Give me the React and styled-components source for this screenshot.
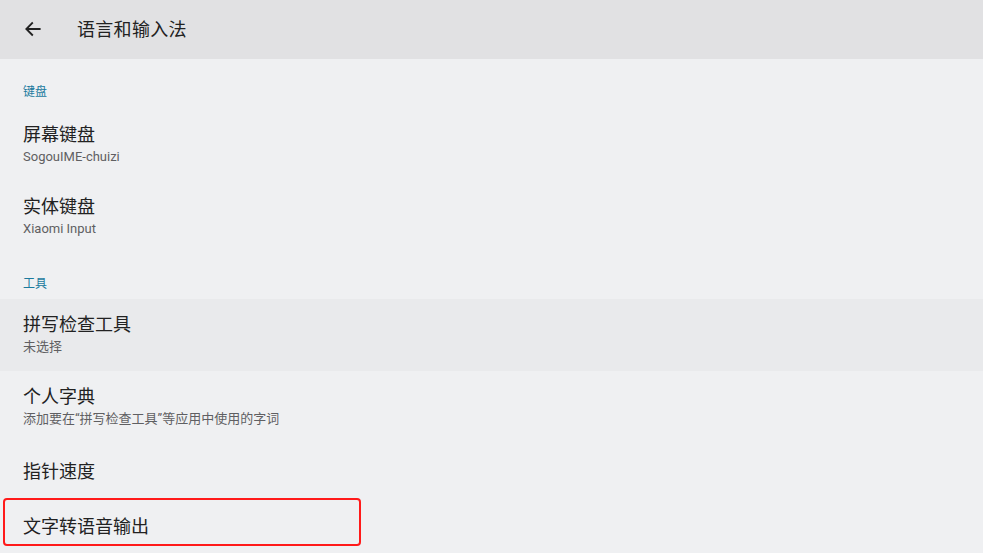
import React from "react";
import styled, { createGlobalStyle } from "styled-components";

const GlobalStyle = createGlobalStyle`
  html, body {
    margin: 0;
    padding: 0;
    background: #eff0f2;
    font-family: Roboto, "Noto Sans CJK SC", sans-serif;
    -webkit-font-smoothing: antialiased;
  }
`;

const Screen = styled.div`
  display: flex;
  flex-direction: column;
  width: 983px;
  height: 553px;
  overflow: hidden;
  background: #eff0f2;
`;

const TopBar = styled.div`
  display: flex;
  align-items: center;
  height: 59px;
  flex-shrink: 0;
  background: #e1e1e3;
`;

const BackButton = styled.div`
  display: flex;
  align-items: center;
  justify-content: center;
  width: 66px;
  height: 59px;
  padding-bottom: 1px;
  box-sizing: border-box;
  color: #222;
`;

const PageTitle = styled.div`
  margin-left: 11px;
  padding-bottom: 4px;
  font-size: 18px;
  color: #222;
  letter-spacing: 0.3px;
`;

const List = styled.div`
  display: flex;
  flex-direction: column;
  flex: 1;
`;

const Category = styled.div`
  height: ${(p) => p.$height}px;
  box-sizing: border-box;
  padding: ${(p) => p.$top}px 23px 0;
  font-size: 12px;
  line-height: 16px;
  color: #1b7a9e;
`;

const Row = styled.div`
  display: flex;
  flex-direction: column;
  box-sizing: border-box;
  height: ${(p) => (p.$single ? 55 : 72)}px;
  padding: ${(p) => (p.$single ? 17 : 14)}px 23px 0;
  background: ${(p) => (p.$active ? "#e9eaec" : "transparent")};
  position: relative;
`;

const Title = styled.div`
  font-size: 18px;
  line-height: 24px;
  color: #222;
`;

const Summary = styled.div`
  font-size: 13px;
  line-height: 16px;
  margin-top: 2px;
  color: #5f5f62;
`;

const Highlight = styled.div`
  position: absolute;
  left: 3px;
  top: 0;
  width: 358px;
  height: 48px;
  border: 2px solid #ff1a1a;
  border-radius: 4px;
  box-sizing: border-box;
  pointer-events: none;
`;

const BottomEdge = styled.div`
  height: 2px;
  flex-shrink: 0;
  background: #7b7b7d;
`;

const items = [
  { type: "cat", label: "键盘", height: 50, top: 25 },
  { title: "屏幕键盘", summary: "SogouIME-chuizi" },
  { title: "实体键盘", summary: "Xiaomi Input" },
  { type: "cat", label: "工具", height: 46, top: 23 },
  { title: "拼写检查工具", summary: "未选择", active: true },
  { title: "个人字典", summary: "添加要在“拼写检查工具”等应用中使用的字词" },
  { title: "指针速度" },
];

const BackArrow = () => (
  <svg width="20" height="20" viewBox="0 0 24 24" fill="none">
    <path
      d="M20 12H5M11 5l-7 7 7 7"
      stroke="currentColor"
      strokeWidth="2.2"
      strokeLinecap="square"
    />
  </svg>
);

const App = () => {
  return (
    <Screen>
      <GlobalStyle />
      <TopBar>
        <BackButton>
          <BackArrow />
        </BackButton>
        <PageTitle>语言和输入法</PageTitle>
      </TopBar>
      <List>
        {items.map((item, index) => {
          if (item.type === "cat") {
            return (
              <Category key={index} $height={item.height} $top={item.top}>
                {item.label}
              </Category>
            );
          }
          const single = !item.summary;
          return (
            <Row key={index} $single={single} $active={item.active}>
              <Title>{item.title}</Title>
              {item.summary && <Summary>{item.summary}</Summary>}
            </Row>
          );
        })}
        <Row $single>
          <Title>文字转语音输出</Title>
          <Highlight />
        </Row>
      </List>
      <BottomEdge />
    </Screen>
  );
};

export default App;
